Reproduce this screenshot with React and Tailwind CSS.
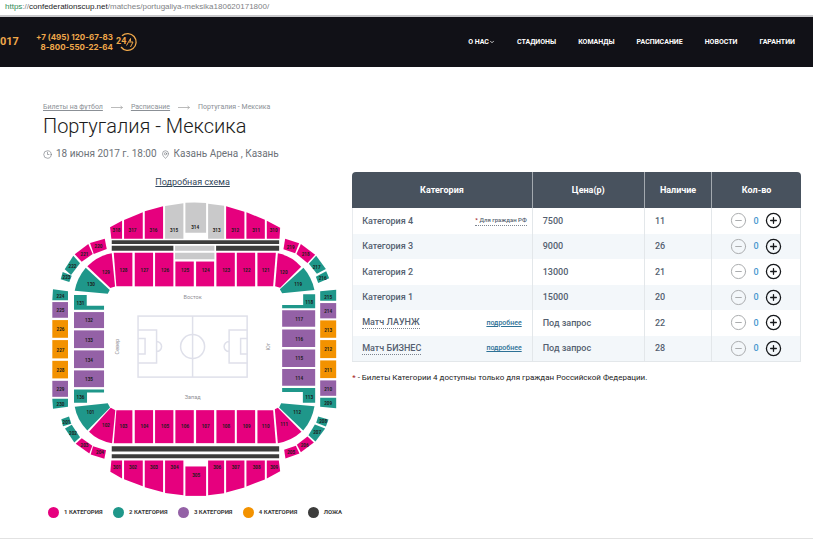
import React, { useState } from 'react';
import { ChevronDown, CircleMinus, CirclePlus, Clock3, MapPin } from 'lucide-react';

const PINK = '#e6007e';
const TEAL = '#1f978a';
const VIOLET = '#9461a6';
const ORANGE = '#f39200';
const DARK = '#3c3c3b';
const GRAY = '#c9c9ca';

const NAV = ['СТАДИОНЫ', 'КОМАНДЫ', 'РАСПИСАНИЕ', 'НОВОСТИ', 'ГАРАНТИИ'];

const LEGEND = [
  { label: '1 КАТЕГОРИЯ', dot: 'bg-[#e6007e]' },
  { label: '2 КАТЕГОРИЯ', dot: 'bg-[#1f978a]' },
  { label: '3 КАТЕГОРИЯ', dot: 'bg-[#9461a6]' },
  { label: '4 КАТЕГОРИЯ', dot: 'bg-[#f39200]' },
  { label: 'ЛОЖА', dot: 'bg-[#3c3c3b]' },
];

const TICKETS = [
  { name: 'Категория 4', price: '7500', left: 11, citizens: true },
  { name: 'Категория 3', price: '9000', left: 26 },
  { name: 'Категория 2', price: '13000', left: 21 },
  { name: 'Категория 1', price: '15000', left: 20 },
  { name: 'Матч ЛАУНЖ', price: 'Под запрос', left: 22, more: true },
  { name: 'Матч БИЗНЕС', price: 'Под запрос', left: 28, more: true },
];

// [label, label x, label y, fill, path]
const SECTORS = [
  // upper stand
  ['318', 116.5, 231, PINK, 'M110 227.3L122 220.7V238.7H111.3Z'],
  ['317', 132.5, 231, PINK, 'M124 220L142.7 212.3V238.7H124Z'],
  ['316', 153.5, 231, PINK, 'M144.7 211.3L163 206.3V238.7H144.7Z'],
  ['315', 174, 231, GRAY, 'M165 206L183.3 203.3V238.7H165Z'],
  ['314', 195, 227.5, GRAY, 'M185.3 202.8Q196 202.2 206 203V232.7H185.3Z'],
  ['313', 216.5, 231, GRAY, 'M208 203.7L224 205.7V238.7H208Z'],
  ['312', 235, 231, PINK, 'M226 206.3L244.3 211.7V238.7H226Z'],
  ['311', 256, 231, PINK, 'M246.3 212.3L264.7 219.7V238.7H246.3Z'],
  ['310', 273.5, 231, PINK, 'M266.7 220.7L280 227.7L279.3 238.7H266.7Z'],
  // lower part of the east stand
  ['128', 123.5, 271, PINK, 'M113.7 252.7H132.3V286.3H116.3Z'],
  ['127', 144.5, 271, PINK, 'M134.7 252.7H153V286.3H134.7Z'],
  ['126', 165, 271, PINK, 'M155 252.7H173.3V286.3H155Z'],
  ['125', 185, 271, PINK, 'M175.3 261.5H193.7V286.3H175.3Z'],
  ['124', 205.5, 271, PINK, 'M196 261.5H214V286.3H196Z'],
  ['123', 226, 271, PINK, 'M216.3 252.7H234.7V286.3H216.3Z'],
  ['122', 246.5, 271, PINK, 'M236.7 252.7H255V286.3H236.7Z'],
  ['121', 265.5, 271, PINK, 'M257.3 252.7H275.7L273 286.3H257.3Z'],
  // inner corners
  ['129', 106, 273, PINK, 'M111.7 253.3Q98 255.5 87.3 266.3L110.3 288L115 286.5Z'],
  ['130', 91, 284.5, TEAL, 'M85.7 267.7Q77 278 74.7 290.7L107.7 293.7L109.7 290Z'],
  ['120', 283.5, 273, PINK, 'M277.7 253.3Q291 255.5 301 266.7L280 287.7L275 286.3Z'],
  ['119', 298, 284.5, TEAL, 'M303.3 267.7Q312 278 314.3 290L282 293.3L279.7 289.3Z'],
  ['101', 90.5, 413, TEAL, 'M74.7 406.7L107.7 403L110 407.3L87.3 430.3Q77 420 74.7 406.7Z'],
  ['102', 106, 426, PINK, 'M110.7 407.7L115.3 410L112 443Q98 441 89 431.7Z'],
  ['111', 284, 425, PINK, 'M274.7 409L277.7 407.7L301.3 431.7Q291 441 277.7 443Z'],
  ['112', 297, 413, TEAL, 'M281 403L314.3 406Q312 420 303 430.3L279 407.3Z'],
  // outer corners
  ['220', 98.5, 247, PINK, 'M90 243L104.7 238.7L106.7 249L93.7 254Z'],
  ['221', 84.5, 254.5, PINK, 'M74.7 254.3L88.3 244L92.7 254L81.7 261.7Z'],
  ['222', 72.5, 267, TEAL, 'M73.3 255.7L80 263.3L71 275L64.7 269.3Z'],
  ['223', 66.5, 278, TEAL, 'M62.7 272L71.7 275.7L69.3 282L60.7 279.3Z'],
  ['219', 290.5, 247.5, PINK, 'M285 238.7L299 243.3L295 253.3L283.3 249.3Z'],
  ['218', 305.5, 255, PINK, 'M300.7 244L315 254.7L307.3 263L296.3 254Z'],
  ['217', 316.5, 268, TEAL, 'M316 255.7L325.7 269L316.7 273.7L308.7 263.7Z'],
  ['216', 322.5, 279, TEAL, 'M326 271.3L329 278.3L318 283L315.7 276.7Z'],
  ['201', 66.5, 422.5, TEAL, 'M61.3 419L69 416.3L71.3 423.7L63 426Z'],
  ['202', 73, 434, TEAL, 'M65 428.3L71.7 424.7L80 437L74.3 442.3Z'],
  ['203', 84.5, 446, PINK, 'M75.7 443.7L81.7 438L92.3 445.7L89.3 453.3Z'],
  ['204', 100, 453, PINK, 'M93 446L106 450L104.3 458.7L90.7 454.3Z'],
  ['205', 291, 453, PINK, 'M284 449.7L295.7 445.7L299.3 453.3L285.3 458.3Z'],
  ['206', 304.5, 446, PINK, 'M296.7 444.7L307.3 436.3L313.7 442.3L300.7 452Z'],
  ['207', 317, 433, TEAL, 'M314.7 424.3L325 428.3L315.3 441.3L308.3 435Z'],
  ['208', 323, 422, TEAL, 'M318 416.3L328.3 419.3L325.7 426.3L316 422.7Z'],
  // north side
  ['224', 60.5, 296.5, TEAL, 'M53 289.3L68 291.3V300.3H52.3Z'],
  ['225', 60.5, 311, VIOLET, 'M52.3 302H68V317.7H52.3Z'],
  ['226', 60.5, 330, ORANGE, 'M52.3 320H68V337.7H52.3Z'],
  ['227', 60.5, 350.5, ORANGE, 'M52.3 340H68V358.3H52.3Z'],
  ['228', 60.5, 370.5, ORANGE, 'M52.3 360.7H68V378.3H52.3Z'],
  ['229', 60.5, 390, VIOLET, 'M52.3 380.7H68V396.7H52.3Z'],
  ['230', 60.5, 404.5, TEAL, 'M52.3 398.7H68V406.7L53 408.7Z'],
  ['131', 80.5, 303.5, TEAL, 'M74 295H86.7V305.7H104V309.7H74Z'],
  ['132', 89, 321, VIOLET, 'M74 312H104V328H74Z'],
  ['133', 89, 341, VIOLET, 'M74 330.3H104V348H74Z'],
  ['134', 89, 360.5, VIOLET, 'M74 350.3H104V368H74Z'],
  ['135', 89, 380, VIOLET, 'M74 370.3H104V387H74Z'],
  ['136', 80.5, 398, TEAL, 'M74 389.3H104V392.3H87V402.7H74Z'],
  // south side
  ['215', 328, 297.5, TEAL, 'M320 291.3L336 289.7V300.7H320Z'],
  ['214', 328, 312, VIOLET, 'M320 303H336V318.3H320Z'],
  ['213', 328, 330.5, ORANGE, 'M320 320.3H336V337.7H320Z'],
  ['212', 328, 350, ORANGE, 'M320 340H336V358H320Z'],
  ['211', 328, 370.5, ORANGE, 'M320 360.3H336V378H320Z'],
  ['210', 328, 389.5, VIOLET, 'M320 380.3H336V395.7H320Z'],
  ['209', 328, 403.5, TEAL, 'M320 397.7H336V408L320 406.7Z'],
  ['118', 309, 302.5, TEAL, 'M303 294.3H315V308.3H282V305H303Z'],
  ['117', 299, 319.5, VIOLET, 'M282 310.3H315V326.7H282Z'],
  ['116', 299, 339.5, VIOLET, 'M282 329.3H315V347H282Z'],
  ['115', 299, 358.5, VIOLET, 'M282 349.3H315V367H282Z'],
  ['114', 299, 379, VIOLET, 'M282 369H315V385.7H282Z'],
  ['113', 309, 397.5, TEAL, 'M282 388H315V402.7H302.7V392H282Z'],
  // west stand, inner row
  ['103', 123.5, 427, PINK, 'M116.3 410H132.3V443H113.7Z'],
  ['104', 144.5, 427, PINK, 'M134.7 410H153V443H134.7Z'],
  ['105', 165, 427, PINK, 'M155 410H173.3V443H155Z'],
  ['106', 185, 427, PINK, 'M175.3 410H193.7V443H175.3Z'],
  ['107', 205.5, 427, PINK, 'M196 410H214V443H196Z'],
  ['108', 226, 427, PINK, 'M216.3 410H234.7V443H216.3Z'],
  ['109', 246.5, 427, PINK, 'M236.7 410H255V443H236.7Z'],
  ['110', 265.5, 427, PINK, 'M257.3 410H273L275.7 443H257.3Z'],
  // west stand, outer row
  ['301', 117, 468, PINK, 'M111.3 460.3H122V478.3L110.3 471.7Z'],
  ['302', 133, 468, PINK, 'M124 460.3H142.7V486L124 479Z'],
  ['303', 154, 468, PINK, 'M144.7 460.3H163V492L144.7 487Z'],
  ['304', 174.5, 468, PINK, 'M165 460.3H183.3V495L165 492.7Z'],
  ['305', 196, 475.5, PINK, 'M185.3 466.3H206V495.7H185.3Z'],
  ['306', 217, 468, PINK, 'M208 460.3H224V493L208 495Z'],
  ['307', 235.5, 468, PINK, 'M226 460.3H244.3V487.3L226 492.3Z'],
  ['308', 256.5, 468, PINK, 'M246.3 460.3H264.7V479.3L246.3 486.3Z'],
  ['309', 274, 468, PINK, 'M266.7 460.3H278.7L280 471L266.7 478.3Z'],
];

function StadiumMap() {
  return (
    <svg viewBox="43 200 299 300" className="block w-full" role="img" aria-label="Схема стадиона">
      {SECTORS.map(([label, x, y, fill, d]) => (
        <g key={label}>
          <path d={d} fill={fill} />
          <text x={x} y={y + 1} textAnchor="middle" fontSize="4.6" fontWeight="700" fill="#1d1d1b">{label}</text>
        </g>
      ))}

      <g fill={DARK}>
        <path d="M111.7 240.3H279V244H111.7Z" />
        <path d="M111.7 245.7H173.3V250.7H111.7Z" />
        <path d="M216 245.7H279V250.7H216Z" />
        <path d="M111.7 446H279V451.3H111.7Z" />
        <path d="M111.7 454H279V458H111.7Z" />
      </g>
      <g fill={GRAY}>
        <path d="M175 245.7H214.3V250.7H175Z" />
        <path d="M175 252.7H214.3V259.3H175Z" />
      </g>

      <g fill="none" stroke="#dfe0ea" strokeWidth="1.5">
        <rect x="138" y="316" width="109" height="61" />
        <path d="M192.5 316V377" />
        <circle cx="192.5" cy="346.5" r="12" />
        <path d="M138 330H156.5V363H138M138 338.5H145V354H138M156.5 341.5A5 5 0 0 1 156.5 351.5" />
        <path d="M247 330H229V363H247M247 338.5H240.5V354H247M229 341.5A5 5 0 0 0 229 351.5" />
      </g>

      <g fill="#8f8f95" fontSize="5.5" textAnchor="middle">
        <text x="192.5" y="299">Восток</text>
        <text x="192.5" y="399">Запад</text>
        <text transform="translate(118.5 346.5) rotate(-90)">Север</text>
        <text transform="translate(269.5 346.5) rotate(-90)">Юг</text>
      </g>
    </svg>
  );
}

function RoundTheClock() {
  return (
    <svg width="22" height="20" viewBox="0 0 22 20" fill="none" stroke="#f0a84a" role="img" aria-label="24/7">
      <path d="M6 3.8A8.4 8.4 0 1 1 5 15" strokeWidth="1.3" />
      <text x="0" y="12" fontSize="9" fontWeight="700" fill="#f0a84a" stroke="none">24</text>
      <path d="M10.5 13.5L14.5 6.5V9.5M13 10H17L14.5 15" strokeWidth="1" />
    </svg>
  );
}

function Arrow() {
  return (
    <svg width="12" height="5" viewBox="0 0 12 5" fill="none" stroke="#a9a9a9" strokeWidth="0.8" aria-hidden="true">
      <path d="M0 2.5H11.5M9.5 1L11.5 2.5L9.5 4" />
    </svg>
  );
}

function Quantity({ name, max }) {
  const [count, setCount] = useState(0);

  return (
    <div className="flex items-center justify-center">
      <button
        type="button"
        aria-label={`Убавить: ${name}`}
        onClick={() => setCount(Math.max(0, count - 1))}
        className="text-[#a9abad]"
      >
        <CircleMinus size={17} strokeWidth={1.4} className="block" />
      </button>
      <input
        type="text"
        aria-label={`Количество: ${name}`}
        value={count}
        readOnly
        className="w-[18px] text-center text-[9px] leading-3 text-[#4a97cf]"
      />
      <button
        type="button"
        aria-label={`Добавить: ${name}`}
        onClick={() => setCount(Math.min(max, count + 1))}
        className="text-[#16181b]"
      >
        <CirclePlus size={17} strokeWidth={1.8} className="block" />
      </button>
    </div>
  );
}

function TicketTable() {
  return (
    <table className="h-[190px] w-full table-fixed border-separate border-spacing-0 border-b border-[#e3e7ea] text-[9px] leading-3 text-[#545f70]">
      <thead>
        <tr className="h-9 bg-[#48525e] font-bold text-white">
          <th className="w-[40%] rounded-tl-sm">Категория</th>
          <th className="w-[25%] border-l border-[#a3a9af]">Цена(р)</th>
          <th className="w-[15%] border-l border-[#a3a9af]">Наличие</th>
          <th className="w-[20%] rounded-tr-sm border-l border-[#a3a9af]">Кол-во</th>
        </tr>
      </thead>
      <tbody className="font-medium">
        {TICKETS.map((t) => (
          <tr key={t.name} className="odd:bg-white even:bg-[#f3f7fa]">
            <td className="border-l border-[#e8ebee] pl-[9px]">
              <div className="flex items-center justify-between">
                <span className={t.more ? 'border-b border-dotted border-[#7d8590]' : ''}>{t.name}</span>
                {t.citizens && (
                  <span className="mr-[5px] border-b border-dotted border-[#7d8590] text-[6px] leading-[10px]">
                    <span className="text-[#a02020]">*</span> Для граждан РФ
                  </span>
                )}
                {t.more && (
                  <a href="#more" className="mr-[10px] text-[7px] text-[#2d7196] underline underline-offset-1">подробнее</a>
                )}
              </div>
            </td>
            <td className="border-l border-[#e3e7ea] pl-[10px]">{t.price}</td>
            <td className="border-l border-[#e3e7ea] pl-[10px]">{t.left}</td>
            <td className="border-x border-[#e3e7ea]">
              <Quantity name={t.name} max={t.left} />
            </td>
          </tr>
        ))}
      </tbody>
    </table>
  );
}

export default function App() {
  return (
    <div className="min-h-screen bg-white font-['Roboto','Liberation_Sans',sans-serif] text-[#222]">
      <div className="flex h-[17px] items-start border-b-2 border-[#c9c9cc] pl-[5px] font-['Liberation_Sans',sans-serif] text-[8px] leading-[14px] text-[#808285]">
        <span className="text-[#2e8b57]">https</span>://<span className="text-[#222]">confederationscup.net</span>/matches/portugaliya-meksika180620171800/
      </div>

      <header className="flex h-[50px] items-center bg-[#111117] pr-[18px]">
        <a href="#home" className="text-[11px] font-bold text-[#f0a84a]">017</a>
        <div className="ml-[17px] text-right font-['Inter','Roboto',sans-serif] text-[8px] leading-[10px] font-bold text-[#f0a84a]">
          <a href="tel:+74951206783" className="block">+7 (495) 120-67-83</a>
          <a href="tel:88005502264" className="block">8-800-550-22-64</a>
        </div>
        <div className="ml-[3px]">
          <RoundTheClock />
        </div>
        <nav className="ml-auto flex items-center gap-[22px] text-[7px] font-bold text-white">
          <a href="#about" className="flex items-center">
            О НАС <ChevronDown size={6} strokeWidth={3} />
          </a>
          {NAV.map((item) => (
            <a key={item} href="#nav">{item}</a>
          ))}
        </nav>
      </header>

      <main className="border-b border-[#e2e2e2] pt-[34px] pr-3 pb-5 pl-[43px]">
        <nav className="flex items-center gap-2 text-[7px] leading-3 text-[#8b9096]">
          <a href="#tickets" className="underline">Билеты на футбол</a>
          <Arrow />
          <a href="#schedule" className="underline">Расписание</a>
          <Arrow />
          <span>Португалия - Мексика</span>
        </nav>
        <h1 className="text-[20px] leading-[26px] font-light text-[#1b1b1b]">Португалия - Мексика</h1>
        <div className="mt-[7px] flex items-center text-[10px] leading-4 text-[#6d7278]">
          <Clock3 size={9} strokeWidth={1.6} />
          <span className="ml-1">18 июня 2017 г. 18:00</span>
          <MapPin size={9} strokeWidth={1.6} className="ml-1" />
          <span className="ml-1">Казань Арена , Казань</span>
        </div>

        <div className="mt-[10px] grid grid-cols-[2fr_3fr] gap-[10px]">
          <section>
            <p className="mt-1 text-center text-[9px] leading-3">
              <a href="#scheme" className="text-[#33475b] underline underline-offset-1">Подробная схема</a>
            </p>
            <div className="mt-3">
              <StadiumMap />
            </div>
            <ul className="mt-[6px] flex items-center justify-between pl-[5px] text-[6px] leading-3 font-bold text-[#3c3c3b]">
              {LEGEND.map((item) => (
                <li key={item.label} className="flex items-center gap-[5px]">
                  <span className={`h-[11px] w-[11px] rounded-full ${item.dot}`} />
                  {item.label}
                </li>
              ))}
            </ul>
          </section>

          <section>
            <TicketTable />
            <p className="mt-[10px] text-[8px] leading-3 text-[#222]">
              <span className="text-[#a02020]">*</span> - Билеты Категории 4 доступны только для граждан Российской Федерации.
            </p>
          </section>
        </div>
      </main>
    </div>
  );
}
